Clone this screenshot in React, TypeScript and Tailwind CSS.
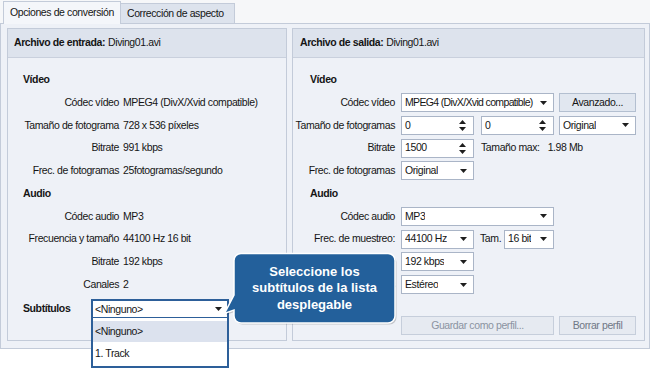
import React from 'react';

const Arrow = () => (
  <svg width="7" height="4" viewBox="0 0 7 4" className="shrink-0">
    <path d="M0 0h7L3.5 4z" fill="#1e1e1e" />
  </svg>
);

const SpinArrows = () => (
  <svg width="7" height="11" viewBox="0 0 7 11" className="shrink-0">
    <path d="M0 4L3.5 0 7 4z M0 7h7L3.5 11z" fill="#1e1e1e" />
  </svg>
);

const Select = ({ w, value, tight }: { w: string; value: string; tight?: boolean }) => (
  <div className={`${w} h-[19px] shrink-0 bg-white border border-[#aab5c7] flex items-center justify-between gap-[2px] pl-[3px] pr-[6px]`}>
    <span className={tight ? 'whitespace-nowrap tracking-[-0.65px]' : 'whitespace-nowrap overflow-hidden'}>{value}</span>
    <Arrow />
  </div>
);

const Spin = ({ value }: { value: string }) => (
  <div className="w-[73px] h-[19px] shrink-0 bg-white border border-[#aab5c7] flex items-center justify-between pl-[3px] pr-[7px]">
    <span>{value}</span>
    <SpinArrows />
  </div>
);

const InfoRow = ({ label, value }: { label: string; value: string }) => (
  <div className="flex items-center h-[22.75px]">
    <div className="w-[111px] text-right whitespace-nowrap">{label}</div>
    <div className="pl-[4px] whitespace-nowrap">{value}</div>
  </div>
);

const CtrlRow = ({ label, children }: { label: string; children: React.ReactNode }) => (
  <div className="flex items-center h-[22.75px]">
    <div className="w-[102px] text-right whitespace-nowrap">{label}</div>
    <div className="pl-[6px] flex items-center">{children}</div>
  </div>
);

const GroupHeader = ({ title, file, pad }: { title: string; file: string; pad: string }) => (
  <div className={`h-[29px] bg-[#dde3ed] border-b border-[#c9d0dd] flex items-center ${pad}`}>
    <span className="font-bold">{title}</span>
    <span className="ml-[3px]">{file}</span>
  </div>
);

const InputPanel = () => (
  <div className="w-[280px] shrink-0 border border-[#c3cbd9] bg-[#eef1f7] relative">
    <GroupHeader title="Archivo de entrada:" file="Diving01.avi" pad="pl-[6px]" />
    <div className="pt-[10.5px]">
      <div className="h-[22.75px] flex items-center pl-[15px] font-bold">Vídeo</div>
      <InfoRow label="Códec vídeo" value="MPEG4 (DivX/Xvid compatible)" />
      <InfoRow label="Tamaño de fotograma" value="728 x 536 píxeles" />
      <InfoRow label="Bitrate" value="991 kbps" />
      <InfoRow label="Frec. de fotogramas" value="25fotogramas/segundo" />
      <div className="h-[22.75px] flex items-center pl-[15px] font-bold">Audio</div>
      <InfoRow label="Códec audio" value="MP3" />
      <InfoRow label="Frecuencia y tamaño" value="44100 Hz 16 bit" />
      <InfoRow label="Bitrate" value="192 kbps" />
      <InfoRow label="Canales" value="2" />
      <div className="mt-[1px] h-[22.75px] flex items-center pl-[15px]">
        <div className="w-[68px] font-bold">Subtítulos</div>
        <div className="relative">
          <div className="w-[138px] h-[18px] bg-white border-2 border-b-0 border-[#2d5f99] flex items-center justify-between pl-[2px] pr-[5px]">
            <span>&lt;Ninguno&gt;</span>
            <Arrow />
          </div>
          {/* open dropdown list */}
          <div className="absolute left-0 top-[18px] w-[138px] h-[51px] bg-white border-2 border-[#2d5f99] border-t-[1px] z-20">
            <div className="mt-[3px] h-[21px] bg-[#dce2ee] flex items-center pl-[2px]">&lt;Ninguno&gt;</div>
            <div className="h-[22px] flex items-center pl-[2px]">1. Track</div>
          </div>
        </div>
      </div>
    </div>
  </div>
);

const OutputPanel = () => (
  <div className="flex-1 border border-[#c3cbd9] bg-[#eef1f7]">
    <GroupHeader title="Archivo de salida:" file="Diving01.avi" pad="pl-[7px]" />
    <div className="pt-[10.5px]">
      <div className="h-[22.75px] flex items-center pl-[17px] font-bold">Vídeo</div>
      <CtrlRow label="Códec vídeo">
        <Select w="w-[153px]" value="MPEG4 (DivX/Xvid compatible)" tight />
        <div className="ml-[5px] w-[77px] h-[19px] bg-[#e1e7f0] border border-[#b3bfd0] flex items-center justify-center">
          Avanzado...
        </div>
      </CtrlRow>
      <CtrlRow label="Tamaño de fotogramas">
        <Spin value="0" />
        <div className="ml-[7px]">
          <Spin value="0" />
        </div>
        <div className="ml-[5px]">
          <Select w="w-[77px]" value="Original" />
        </div>
      </CtrlRow>
      <CtrlRow label="Bitrate">
        <Spin value="1500" />
        <span className="ml-[7px]">Tamaño max:</span>
        <span className="ml-[8px]">1.98 Mb</span>
      </CtrlRow>
      <CtrlRow label="Frec. de fotogramas">
        <Select w="w-[73px]" value="Original" />
      </CtrlRow>
      <div className="h-[22.75px] flex items-center pl-[17px] font-bold">Audio</div>
      <CtrlRow label="Códec audio">
        <Select w="w-[153px]" value="MP3" />
      </CtrlRow>
      <CtrlRow label="Frec. de muestreo:">
        <Select w="w-[73px]" value="44100 Hz" />
        <span className="ml-[6px] w-[24px]">Tam.</span>
        <Select w="w-[50px]" value="16 bit" />
      </CtrlRow>
      <CtrlRow label="Bitrate">
        <Select w="w-[73px]" value="192 kbps" />
      </CtrlRow>
      <CtrlRow label="Canales">
        <Select w="w-[73px]" value="Estéreo" />
      </CtrlRow>
      <div className="mt-[20px] flex pl-[108px]">
        <div className="w-[153px] h-[19px] bg-[#e6eaf1] border border-[#c6cedb] flex items-center justify-center text-[#8b93a1]">
          Guardar como perfil...
        </div>
        <div className="ml-[5px] w-[77px] h-[19px] bg-[#e6eaf1] border border-[#c6cedb] flex items-center justify-center text-[#6f7785]">
          Borrar perfil
        </div>
      </div>
    </div>
  </div>
);

const Callout = () => (
  <>
    <svg width="180" height="76" viewBox="0 0 180 76" className="absolute left-[222px] top-[252px] z-30">
      <path
        d="M19 1.5H166A7 7 0 0 1 173 8.5V64A7 7 0 0 1 166 71H19A7 7 0 0 1 12 64V58L2.5 61.5L12 43V8.5A7 7 0 0 1 19 1.5Z"
        fill="#000"
        opacity="0.18"
        transform="translate(1.5 1.5)"
      />
      <path
        d="M19 1.5H166A7 7 0 0 1 173 8.5V64A7 7 0 0 1 166 71H19A7 7 0 0 1 12 64V58L2.5 61.5L12 43V8.5A7 7 0 0 1 19 1.5Z"
        fill="#23609b"
        stroke="#ffffff"
        strokeWidth="1.5"
      />
    </svg>
    <div className="absolute left-[234px] top-[254px] w-[161px] h-[69px] z-40 flex flex-col items-center justify-center text-white font-bold text-[13px] leading-[16.5px] tracking-normal font-['Liberation_Sans',Arial,sans-serif] text-center">
      <span>Seleccione los</span>
      <span>subtítulos de la lista</span>
      <span>desplegable</span>
    </div>
  </>
);

const App: React.FC = () => {
  return (
    <div className="w-[650px] h-[368px] bg-white relative overflow-hidden text-[10.5px] tracking-[-0.4px] text-[#151515] font-['Liberation_Sans',Arial,sans-serif]">
      {/* tabs */}
      <div className="h-[23px] bg-[#f6f7f9] flex items-end pl-[3px]">
        <div className="relative z-10 -mb-px w-[118px] h-[23px] bg-[#f4f6fa] border border-b-0 border-[#c3cbd9] flex items-center pl-[6px] whitespace-nowrap">
          Opciones de conversión
        </div>
        <div className="w-[114px] h-[20px] bg-[#dde3ed] border border-l-0 border-b-0 border-[#c3cbd9] flex items-center pl-[6px] whitespace-nowrap">
          Corrección de aspecto
        </div>
      </div>
      {/* tab panel */}
      <div className="w-[650px] h-[326px] border border-[#c3cbd9] bg-[#eef1f7] flex gap-[5px] pt-[4px] pl-[6px] pr-[4px] pb-[7px]">
        <InputPanel />
        <OutputPanel />
      </div>
      <Callout />
    </div>
  );
};

export default App;
